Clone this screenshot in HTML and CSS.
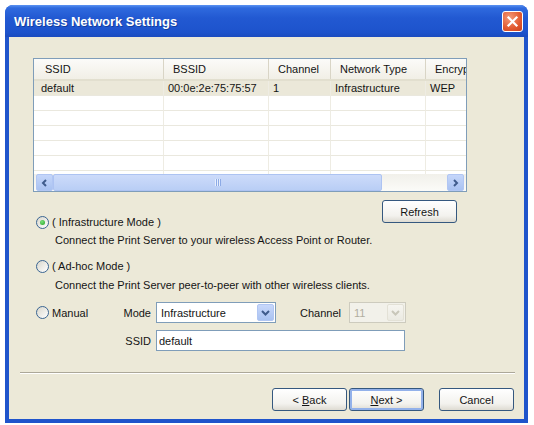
FILE: index.html
```html
<!DOCTYPE html>
<html lang="en">
<head>
    <meta charset="UTF-8">
    <title>Wireless Network Settings</title>
    <link rel="stylesheet" href="styles.css">
</head>
<body>
<div class="window">
    <div class="titlebar">
        <span class="title">Wireless Network Settings</span>
        <button class="close">
            <svg width="13" height="13" viewBox="0 0 13 13"><path d="M2.5 2.5 L10.5 10.5 M10.5 2.5 L2.5 10.5" stroke="#fff" stroke-width="2.2" stroke-linecap="square"/></svg>
        </button>
    </div>

    <div class="client">
        <div class="listview">
            <div class="list-head">
                <span>SSID</span>
                <span>BSSID</span>
                <span>Channel</span>
                <span>Network Type</span>
                <span>Encryption</span>
            </div>
            <div class="list-body">
                <div class="row selected">
                    <span>default</span>
                    <span>00:0e:2e:75:75:57</span>
                    <span>1</span>
                    <span>Infrastructure</span>
                    <span>WEP</span>
                </div>
                <div class="row"><span></span><span></span><span></span><span></span><span></span></div>
                <div class="row"><span></span><span></span><span></span><span></span><span></span></div>
                <div class="row"><span></span><span></span><span></span><span></span><span></span></div>
                <div class="row"><span></span><span></span><span></span><span></span><span></span></div>
                <div class="row"><span></span><span></span><span></span><span></span><span></span></div>
                <div class="row"><span></span><span></span><span></span><span></span><span></span></div>
            </div>
            <div class="hscroll">
                <span class="sb-btn">
                    <svg width="7" height="8" viewBox="0 0 7 8"><path d="M5 1 L2 4 L5 7" fill="none" stroke="#3f5b8c" stroke-width="2"/></svg>
                </span>
                <span class="sb-thumb">
                    <svg width="8" height="7" viewBox="0 0 8 7"><path d="M1.5 0 V7 M3.5 0 V7 M5.5 0 V7" stroke="#e6eefc" stroke-width="1"/><path d="M2.5 0 V7 M4.5 0 V7 M6.5 0 V7" stroke="#8caae6" stroke-width="1"/></svg>
                </span>
                <span class="sb-track"></span>
                <span class="sb-btn">
                    <svg width="7" height="8" viewBox="0 0 7 8"><path d="M2 1 L5 4 L2 7" fill="none" stroke="#3f5b8c" stroke-width="2"/></svg>
                </span>
            </div>
        </div>

        <div class="mode-row">
            <label class="radio-label"><input type="radio" name="mode" checked> ( Infrastructure Mode )</label>
            <button class="btn refresh">Refresh</button>
        </div>
        <p class="desc">Connect the Print Server to your wireless Access Point or Router.</p>

        <div class="option-row">
            <label class="radio-label"><input type="radio" name="mode"> ( Ad-hoc Mode )</label>
        </div>
        <p class="desc desc-2">Connect the Print Server peer-to-peer with other wireless clients.</p>

        <div class="manual-row">
            <label class="radio-label manual"><input type="radio" name="mode"> Manual</label>
            <span class="field-label">Mode</span>
            <div class="combo">
                <span class="combo-text">Infrastructure</span>
                <span class="combo-btn">
                    <svg width="9" height="6" viewBox="0 0 9 6"><path d="M1 1 L4.5 4.5 L8 1" fill="none" stroke="#3f5b8c" stroke-width="2"/></svg>
                </span>
            </div>
            <span class="channel-label">Channel</span>
            <div class="combo disabled">
                <span class="combo-text">11</span>
                <span class="combo-btn">
                    <svg width="9" height="6" viewBox="0 0 9 6"><path d="M1 1 L4.5 4.5 L8 1" fill="none" stroke="#c9c7ba" stroke-width="2"/></svg>
                </span>
            </div>
        </div>

        <div class="ssid-row">
            <span class="field-label">SSID</span>
            <input class="text-input" type="text" value="default">
        </div>

        <div class="separator"></div>

        <div class="buttons">
            <button class="btn">&lt; <u>B</u>ack</button>
            <button class="btn default"><u>N</u>ext &gt;</button>
            <button class="btn cancel">Cancel</button>
        </div>
    </div>
</div>
</body>
</html>
```

FILE: styles.css
```css
* {
    box-sizing: border-box;
}

body {
    margin: 0;
    background-color: #ffffff;
    font-family: "Liberation Sans", Arial, sans-serif;
    font-size: 11px;
    color: #141414;
}

.window {
    display: flex;
    flex-direction: column;
    width: 523px;
    height: 418px;
    margin: 5px 0 0 5px;
    background-color: #1f54cb;
    border-radius: 8px 8px 0 0;
}

.titlebar {
    display: flex;
    align-items: center;
    height: 32px;
    padding: 0 5px 0 9px;
    border-radius: 8px 8px 0 0;
    background: linear-gradient(#5b93f2 0, #2f6ade 3px, #2259d2 40%, #1d53cc 85%, #1a4bbf 100%);
}

.title {
    flex: 1;
    color: #ffffff;
    font-weight: bold;
    font-size: 13px;
    text-shadow: 1px 1px #123e9e;
}

.close {
    display: flex;
    align-items: center;
    justify-content: center;
    width: 21px;
    height: 21px;
    padding: 0;
    border: 1px solid #ffffff;
    border-radius: 3px;
    background: radial-gradient(circle at 35% 30%, #f39a7a, #e2592f 60%, #c9401c);
}

.client {
    display: flex;
    flex-direction: column;
    flex: 1;
    margin: 0 4px 4px;
    padding-top: 21px;
    background-color: #ece9d8;
}

/* list view */

.listview {
    display: flex;
    flex-direction: column;
    width: 434px;
    height: 134px;
    margin-left: 24px;
    border: 1px solid #7f9db9;
    background-color: #ffffff;
    overflow: hidden;
}

.list-head,
.row {
    display: grid;
    grid-template-columns: 130px 105px 62px 95px 80px;
    width: 472px;
}

.list-head {
    height: 22px;
    background: linear-gradient(#fbfbf9, #f1efe6);
    border-bottom: 2px solid #e2dfcf;
}

.list-head span {
    display: flex;
    align-items: center;
    padding-left: 9px;
    border-right: 1px solid #d9d5c6;
    white-space: nowrap;
    overflow: hidden;
}

.list-head span:first-child {
    padding-left: 11px;
}

.list-body {
    flex: 1;
    overflow: hidden;
}

.row {
    height: 15px;
}

.row span {
    padding-left: 4px;
    line-height: 14px;
    border-right: 1px solid #eeece3;
    border-bottom: 1px solid #eae8de;
    white-space: nowrap;
    overflow: hidden;
}

.row span:first-child {
    padding-left: 7px;
}

.row.selected {
    background-color: #ebe8d9;
}

.hscroll {
    display: flex;
    height: 17px;
    padding: 0 2px;
    background: linear-gradient(#f1f0ea, #fbfbf8);
}

.sb-btn {
    display: flex;
    align-items: center;
    justify-content: center;
    width: 17px;
    border: 1px solid #b1c6f3;
    border-radius: 2px;
    background: linear-gradient(#c5d6fa, #a9c2f1);
}

.sb-thumb {
    display: flex;
    align-items: center;
    justify-content: center;
    width: 329px;
    border: 1px solid #adc3f2;
    border-radius: 2px;
    background: linear-gradient(#cddbfa, #b9cef5);
}

.sb-track {
    flex: 1;
}

/* options */

.radio-label {
    display: flex;
    align-items: center;
    gap: 3px;
    height: 14px;
    white-space: nowrap;
}

input[type=radio] {
    position: relative;
    appearance: none;
    width: 13px;
    height: 13px;
    margin: 0;
    border: 1px solid #3a6592;
    border-radius: 50%;
    background: linear-gradient(135deg, #d9d7cc, #ffffff);
}

input[type=radio]:checked::after {
    content: "";
    position: absolute;
    left: 3px;
    top: 3px;
    width: 5px;
    height: 5px;
    border-radius: 50%;
    background: radial-gradient(circle at 40% 35%, #7be07b, #22a322);
}

.mode-row {
    display: flex;
    align-items: flex-end;
    justify-content: space-between;
    height: 29px;
    margin-top: 8px;
    padding: 0 67px 0 27px;
}

.refresh {
    align-self: flex-start;
    width: 77px;
}

.desc {
    margin: 4px 0 0 46px;
    line-height: 14px;
}

.option-row {
    margin-top: 12px;
    padding-left: 27px;
}

.desc-2 {
    margin-top: 5px;
}

.manual-row {
    display: flex;
    align-items: center;
    height: 21px;
    margin-top: 10px;
    padding-left: 27px;
}

.radio-label.manual {
    width: 84px;
}

.field-label {
    width: 31px;
    margin-right: 5px;
    text-align: right;
}

.combo {
    display: flex;
    align-items: center;
    width: 120px;
    height: 21px;
    padding: 1px 1px 1px 4px;
    border: 1px solid #7f9db9;
    background-color: #ffffff;
}

.combo-text {
    flex: 1;
}

.combo-btn {
    display: flex;
    align-items: center;
    justify-content: center;
    width: 17px;
    height: 17px;
    border: 1px solid #b1c6f3;
    border-radius: 2px;
    background: linear-gradient(#c8d8fb, #a9c2f1);
}

.channel-label {
    margin: 0 8px 0 24px;
}

.combo.disabled {
    width: 57px;
    border-color: #cdcbbe;
    background-color: #f2f1ea;
    color: #b1ae9f;
}

.combo.disabled .combo-btn {
    border-color: #e3e1d6;
    background: linear-gradient(#f6f5f0, #ebeae2);
}

.ssid-row {
    display: flex;
    align-items: center;
    height: 21px;
    margin-top: 7px;
    padding-left: 111px;
}

.text-input {
    width: 249px;
    height: 21px;
    padding: 0 2px;
    border: 1px solid #7f9db9;
    font: inherit;
    color: inherit;
}

.separator {
    margin: 21px 9px 0 11px;
    border-top: 1px solid #aca899;
    border-bottom: 1px solid #ffffff;
}

/* buttons */

.buttons {
    display: flex;
    justify-content: flex-end;
    gap: 2px;
    margin-top: 14px;
    padding-right: 10px;
}

.btn {
    width: 75px;
    height: 23px;
    padding: 0;
    border: 1px solid #35587f;
    border-radius: 3px;
    background: linear-gradient(#ffffff, #f3f2ee 70%, #dedbd2);
    font-family: inherit;
    font-size: 11px;
    color: #141414;
}

.btn.default {
    box-shadow: inset 0 0 0 2px #93b1ea;
}

.btn.cancel {
    margin-left: 13px;
}
```
